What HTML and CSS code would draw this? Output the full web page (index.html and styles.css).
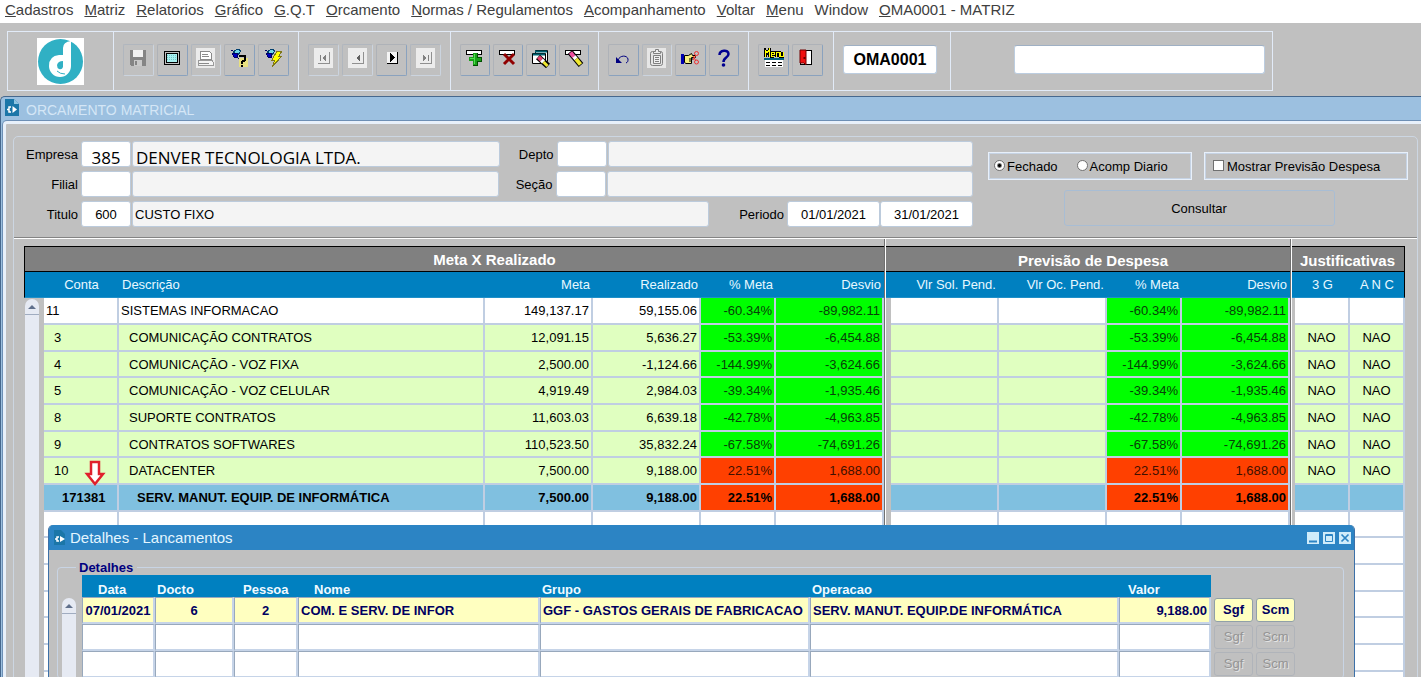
FILE: index.html
```html
<!DOCTYPE html>
<html lang="pt-BR">
<head>
  <meta charset="UTF-8">
  <meta name="viewport" content="width=device-width, initial-scale=1.0">
  <title>Orcamento Matricial</title>
  <link rel="stylesheet" href="styles.css">
</head>
<body>
  <!-- Menu bar -->
  <nav class="menubar">
    <a href="#"><u>C</u>adastros</a>
    <a href="#"><u>M</u>atriz</a>
    <a href="#"><u>R</u>elatorios</a>
    <a href="#"><u>G</u>ráfico</a>
    <a href="#"><u>G</u>.Q.T</a>
    <a href="#"><u>O</u>rcamento</a>
    <a href="#"><u>N</u>ormas / Regulamentos</a>
    <a href="#"><u>A</u>companhamento</a>
    <a href="#"><u>V</u>oltar</a>
    <a href="#"><u>M</u>enu</a>
    <a href="#">Window</a>
    <a href="#"><u>O</u>MA0001 - MATRIZ</a>
  </nav>

  <!-- Toolbar -->
  <div class="toolbar">
    <div class="group logo">
      <svg width="47" height="47" viewBox="0 0 47 47">
        <rect width="47" height="47" fill="#fff"/>
        <circle cx="23.500" cy="23.500" r="22.500" fill="#30b0c4"/>
        <path d="M26 10q0-6 8-7v25a11 11 0 0 1-22 0q0-10 10-11h4z" fill="#fff"/>
        <path d="M26 23v6q-1 3-4 2-2-1-2-4 1-4 6-4z" fill="#30b0c4"/>
        <path d="M20 33q3 3 8 3" fill="none" stroke="#30b0c4" stroke-width="1"/>
      </svg>
    </div>
    <div class="group tools-file">
      <button class="tool" disabled aria-label="Salvar">
        <svg width="20" height="20" viewBox="0 0 20 20" shape-rendering="crispEdges">
          <path d="M2 2h15l1 1v15H3l-1-1z" fill="#858585"/>
          <rect x="5" y="2" width="10" height="7" fill="#f2f2f2"/>
          <rect x="6" y="12" width="8" height="6" fill="#c9c9c9"/>
          <rect x="7" y="13" width="2" height="4" fill="#858585"/>
        </svg>
      </button>
      <button class="tool" aria-label="Tela">
        <svg width="20" height="20" viewBox="0 0 20 20" shape-rendering="crispEdges">
          <rect x="2" y="3" width="16" height="14" rx="1" fill="#000"/>
          <rect x="3" y="4" width="14" height="12" fill="#c0c0c0"/>
          <rect x="4" y="5" width="12" height="10" fill="#000"/>
          <rect x="5" y="6" width="10" height="8" fill="#a8f0f0"/>
          <path d="M5 7.500h10M5 9.500h10M5 11.500h10" stroke="#70c8c8" stroke-dasharray="1 1"/>
        </svg>
      </button>
      <button class="tool" disabled aria-label="Imprimir">
        <svg width="20" height="20" viewBox="0 0 20 20" shape-rendering="crispEdges">
          <rect width="19" height="20" fill="#ebebeb"/>
          <path d="M4 3h9l2 2v6H4z" fill="#fff" stroke="#8a8a8a"/>
          <path d="M6 6h6M6 8h7" stroke="#8a8a8a"/>
          <path d="M2 12h14l1 2v3H2z" fill="#f5f5f5" stroke="#9a9a9a"/>
          <path d="M3 15h10" stroke="#8a8a8a"/>
        </svg>
      </button>
      <button class="tool" aria-label="Entrar consulta">
        <svg width="20" height="20" viewBox="0 0 20 20" shape-rendering="crispEdges">
          <path d="M9 10h9v9H9z" fill="#e8e080"/>
          <path d="M3 4l5-3 3 2-3 4z" fill="#70d8e8" stroke="#004070"/>
          <path d="M1 2l2 1M2 5l5 0 1 5-4-1z" fill="#0000c0" stroke="#000060"/>
          <path d="M10 9V8h5v4l-3 2v2M12 17v2" fill="none" stroke="#000" stroke-width="2"/>
        </svg>
      </button>
      <button class="tool" aria-label="Executar consulta">
        <svg width="20" height="20" viewBox="0 0 20 20" shape-rendering="crispEdges">
          <path d="M3 4l5-3 3 2-3 4z" fill="#70d8e8" stroke="#004070"/>
          <path d="M1 2l2 1M2 5l5 0 1 5-4-1z" fill="#0000c0" stroke="#000060"/>
          <path d="M13 3h5l-3 5h3l-10 11 3-7H8z" fill="#ffff00" stroke="#807818" stroke-width="1"/>
        </svg>
      </button>
    </div>
    <div class="group tools-nav">
      <button class="tool" disabled aria-label="Primeiro">
        <svg width="20" height="20" viewBox="0 0 20 20" shape-rendering="crispEdges">
          <rect width="19" height="20" fill="#ececec"/>
          <path d="M4 15.500h11.500V4" fill="none" stroke="#909090"/>
          <path d="M6 7h1v6h-1zM12 7v6l-4-3z" fill="#808080"/>
        </svg>
      </button>
      <button class="tool" disabled aria-label="Anterior">
        <svg width="20" height="20" viewBox="0 0 20 20" shape-rendering="crispEdges">
          <rect width="19" height="20" fill="#ececec"/>
          <path d="M4 15.500h11.500V4" fill="none" stroke="#909090"/>
          <path d="M12 6v8l-4-4z" fill="#606060"/>
        </svg>
      </button>
      <button class="tool" aria-label="Próximo">
        <svg width="20" height="20" viewBox="0 0 20 20" shape-rendering="crispEdges">
          <rect x="5" y="4" width="11" height="12" fill="#f4f4f4"/>
          <path d="M5 15.500h10.500V4" fill="none" stroke="#000"/>
          <path d="M8 5v9l5-4.500z" fill="#000"/>
        </svg>
      </button>
      <button class="tool" disabled aria-label="Último">
        <svg width="20" height="20" viewBox="0 0 20 20" shape-rendering="crispEdges">
          <rect width="19" height="20" fill="#ececec"/>
          <path d="M4 15.500h11.500V4" fill="none" stroke="#909090"/>
          <path d="M12 7h1v6h-1zM7 7v6l4-3z" fill="#808080"/>
        </svg>
      </button>
    </div>
    <div class="group tools-record">
      <button class="tool" aria-label="Inserir registro">
        <svg width="20" height="20" viewBox="0 0 20 20" shape-rendering="crispEdges">
          <rect x="1.500" y="2.500" width="15" height="4" fill="#fff" stroke="#000"/>
          <path d="M8 5h4v4h4v4h-4v4H8v-4H4V9h4z" fill="#18a018"/>
          <path d="M12 5v4h4v4h-4v4H8" fill="none" stroke="#005000"/>
          <path d="M9 6v10M5 10h4" stroke="#50e050"/>
        </svg>
      </button>
      <button class="tool" aria-label="Excluir registro">
        <svg width="20" height="20" viewBox="0 0 20 20">
          <rect x="1.500" y="2.500" width="15" height="4" fill="#fff" stroke="#000"/>
          <path d="M6 6l10 10M16 6L6 16" stroke="#900000" stroke-width="3"/>
        </svg>
      </button>
      <button class="tool" aria-label="Limpar bloco">
        <svg width="20" height="20" viewBox="0 0 20 20">
          <path d="M4.500 2.500h12v11h-12z" fill="#fff" stroke="#000"/>
          <path d="M1.500 5.500h13v10h-13z" fill="#fff" stroke="#000"/>
          <path d="M4 3.500h12M2 6.500h12" stroke="#006070" stroke-width="2"/>
          <path d="M7 9l10 9" stroke="#000" stroke-width="6"/>
          <path d="M7.500 9l3 3" stroke="#e8406c" stroke-width="4"/>
          <path d="M10.500 12l2 2" stroke="#fff" stroke-width="4"/>
          <path d="M12.500 14l4 4" stroke="#f0e830" stroke-width="3"/>
        </svg>
      </button>
      <button class="tool" aria-label="Limpar registro">
        <svg width="20" height="20" viewBox="0 0 20 20">
          <rect x="1.500" y="2.500" width="15" height="4" fill="#fff" stroke="#000"/>
          <path d="M6 4l11 13" stroke="#000" stroke-width="6"/>
          <path d="M6.500 4.500l3.500 4.500" stroke="#f050a0" stroke-width="4"/>
          <path d="M10 8.500l2 2.500" stroke="#fff" stroke-width="4"/>
          <path d="M12 11l4.500 5.500" stroke="#f0e830" stroke-width="4"/>
        </svg>
      </button>
    </div>
    <div class="group tools-edit">
      <button class="tool" aria-label="Desfazer">
        <svg width="20" height="20" viewBox="0 0 20 20">
          <path d="M5 12c2-5 9-5 10-1 0 2 0 3-2 4" fill="none" stroke="#000080" stroke-width="1"/>
          <path d="M3 9v6h6z" fill="#000080"/>
        </svg>
      </button>
      <button class="tool" disabled aria-label="Colar">
        <svg width="20" height="20" viewBox="0 0 20 20">
          <rect width="19" height="20" fill="#e6e6e6"/>
          <rect x="3.500" y="3.500" width="12" height="14" rx="2" fill="#e6e6e6" stroke="#808080"/>
          <path d="M6.500 3.500h2v-2h3v2h2v2h-7zM6.500 7.500h7v8h-7z" fill="#f0f0f0" stroke="#808080"/>
          <path d="M8 9.500h4M8 11.500h4M8 13.500h4" stroke="#808080"/>
        </svg>
      </button>
      <button class="tool" aria-label="Lista">
        <svg width="20" height="20" viewBox="0 0 20 20">
          <rect x="1" y="6" width="3" height="10" fill="#0000b0"/>
          <path d="M4.500 7.500h4l3-2 1 2h3v2h-4v6H6l-1.500-1z" fill="#f8f080" stroke="#000"/>
          <path d="M9 11h4M9 13h3" stroke="#000"/>
          <path d="M13 8l3 5M13 12l3-5" stroke="#f03030"/>
          <circle cx="16.500" cy="5.500" r="2" fill="none" stroke="#f03030"/>
          <circle cx="16.500" cy="14" r="2" fill="none" stroke="#f03030"/>
        </svg>
      </button>
      <button class="tool" aria-label="Ajuda">
        <svg width="20" height="20" viewBox="0 0 20 20">
          <path d="M5.500 7c0-5 9-6 9-1 0 4-5 3-5 8" fill="none" stroke="#000090" stroke-width="2.500"/>
          <circle cx="9.500" cy="17" r="1.800" fill="#000090"/>
        </svg>
      </button>
    </div>
    <div class="group tools-exit">
      <button class="tool" aria-label="Menu">
        <svg width="20" height="20" viewBox="0 0 20 20" shape-rendering="crispEdges">
          <path d="M1 9V2l2 3 2-3v7M7 6h3V4H7v4h3M12 9V4h3v5M16 4v4h3V4" fill="none" stroke="#000" stroke-width="3"/>
          <path d="M1 9V2l2 3 2-3v7M7 6h3V4H7v4h3M12 9V4h3v5M16 4v4h3V4" fill="none" stroke="#ffff00" stroke-width="1"/>
          <rect x="0" y="10" width="20" height="2" fill="#006080"/>
          <rect x="1" y="12" width="18" height="7" fill="#fff"/>
          <path d="M2 14.500h16M2 17.500h16" stroke="#000" stroke-dasharray="4 2"/>
        </svg>
      </button>
      <button class="tool" aria-label="Sair">
        <svg width="20" height="20" viewBox="0 0 20 20">
          <rect x="2.500" y="2.500" width="11" height="14" fill="#fff" stroke="#000"/>
          <path d="M2 2h6v15l-2-2H2z" fill="#f01010" stroke="#700000" stroke-width="1"/>
          <rect x="5.500" y="9" width="2" height="2" fill="#600"/>
        </svg>
      </button>
    </div>
    <div class="group code-box">
      <input type="text" class="screen-code" value="OMA0001" aria-label="Tela">
    </div>
    <div class="group search-box">
      <input type="text" class="screen-search" aria-label="Pesquisa">
    </div>
  </div>

  <!-- Main window -->
  <main class="window">
    <header class="window-title">
      <svg width="14" height="17" viewBox="0 0 14 17">
        <path d="M0 0h9l5 5v12H0z" fill="#1b76a8"/>
        <path d="M9 0l5 5H9z" fill="#8fc4e0"/>
        <path d="M6 8H4v5h2M2 10.500h2" fill="none" stroke="#fff" stroke-width="1.500"/>
        <path d="M7.500 7l4.500 3.500L7.500 14z" fill="#fff"/>
      </svg>
      <h1>ORCAMENTO MATRICIAL</h1>
    </header>
    <div class="window-body">
      <div class="panel">
        <form class="filters">
          <div class="fields">
            <div class="field-row">
              <label for="empresa">Empresa</label>
              <input type="text" id="empresa" class="code large" value="385">
              <input type="text" class="name large" value="DENVER TECNOLOGIA LTDA." aria-label="Nome da empresa" readonly>
              <label for="depto" class="second">Depto</label>
              <input type="text" id="depto" class="code">
              <input type="text" class="name" aria-label="Nome do depto" readonly>
            </div>
            <div class="field-row">
              <label for="filial">Filial</label>
              <input type="text" id="filial" class="code">
              <input type="text" class="name" aria-label="Nome da filial" readonly>
              <label for="secao" class="second">Seção</label>
              <input type="text" id="secao" class="code">
              <input type="text" class="name" aria-label="Nome da seção" readonly>
            </div>
            <div class="field-row">
              <label for="titulo">Titulo</label>
              <input type="text" id="titulo" class="code" value="600">
              <input type="text" class="name" value="CUSTO FIXO" aria-label="Nome do titulo" readonly>
              <label for="periodo" class="period">Periodo</label>
              <input type="text" id="periodo" class="date" value="01/01/2021">
              <input type="text" class="date" value="31/01/2021" aria-label="Periodo final">
            </div>
          </div>
          <div class="options">
            <div class="option-row">
              <div class="option-box">
                <label><input type="radio" name="tipo" checked>Fechado</label>
                <label><input type="radio" name="tipo">Acomp Diario</label>
              </div>
              <div class="option-box">
                <label><input type="checkbox">Mostrar Previsão Despesa</label>
              </div>
            </div>
            <button type="button" class="consultar">Consultar</button>
          </div>
        </form>

        <!-- Budget table -->
        <table class="budget">
          <colgroup>
            <col class="w-scroll"><col class="w-pct"><col><col class="w-value"><col class="w-value"><col class="w-pct"><col class="w-value">
            <col class="w-gap"><col class="w-value"><col class="w-value"><col class="w-pct"><col class="w-value">
            <col class="w-gap-small"><col class="w-flag"><col class="w-flag">
          </colgroup>
          <thead>
            <tr class="titles">
              <th colspan="7" class="main">Meta X Realizado</th>
              <th class="gap"></th>
              <th colspan="4" class="low">Previsão de Despesa</th>
              <th class="gap"></th>
              <th colspan="2" class="low left">Justificativas</th>
            </tr>
            <tr class="heads">
              <th></th><th>Conta</th><th class="left">Descrição</th><th class="num">Meta</th><th class="num">Realizado</th><th class="num">% Meta</th><th class="num">Desvio</th>
              <th class="gap"></th><th class="num">Vlr Sol. Pend.</th><th class="num">Vlr Oc. Pend.</th><th class="num">% Meta</th><th class="num">Desvio</th>
              <th class="gap"></th><th>3 G</th><th>A N C</th>
            </tr>
          </thead>
          <tbody>
            <tr>
              <td rowspan="15" class="scroll"><div class="scrollbar"><button type="button" aria-label="Subir"></button></div></td>
              <td>11</td><td>SISTEMAS INFORMACAO</td><td class="num">149,137.17</td><td class="num">59,155.06</td><td class="num good">-60.34%</td><td class="num good">-89,982.11</td>
              <td class="gap"></td><td></td><td></td><td class="num good">-60.34%</td><td class="num good">-89,982.11</td>
              <td class="gap"></td><td></td><td></td>
            </tr>
            <tr class="item">
              <td>3</td><td>COMUNICAÇÃO CONTRATOS</td><td class="num">12,091.15</td><td class="num">5,636.27</td><td class="num good">-53.39%</td><td class="num good">-6,454.88</td>
              <td class="gap"></td><td></td><td></td><td class="num good">-53.39%</td><td class="num good">-6,454.88</td>
              <td class="gap"></td><td class="flag">NAO</td><td class="flag">NAO</td>
            </tr>
            <tr class="item">
              <td>4</td><td>COMUNICAÇÃO - VOZ FIXA</td><td class="num">2,500.00</td><td class="num">-1,124.66</td><td class="num good">-144.99%</td><td class="num good">-3,624.66</td>
              <td class="gap"></td><td></td><td></td><td class="num good">-144.99%</td><td class="num good">-3,624.66</td>
              <td class="gap"></td><td class="flag">NAO</td><td class="flag">NAO</td>
            </tr>
            <tr class="item">
              <td>5</td><td>COMUNICAÇÃO - VOZ CELULAR</td><td class="num">4,919.49</td><td class="num">2,984.03</td><td class="num good">-39.34%</td><td class="num good">-1,935.46</td>
              <td class="gap"></td><td></td><td></td><td class="num good">-39.34%</td><td class="num good">-1,935.46</td>
              <td class="gap"></td><td class="flag">NAO</td><td class="flag">NAO</td>
            </tr>
            <tr class="item">
              <td>8</td><td>SUPORTE CONTRATOS</td><td class="num">11,603.03</td><td class="num">6,639.18</td><td class="num good">-42.78%</td><td class="num good">-4,963.85</td>
              <td class="gap"></td><td></td><td></td><td class="num good">-42.78%</td><td class="num good">-4,963.85</td>
              <td class="gap"></td><td class="flag">NAO</td><td class="flag">NAO</td>
            </tr>
            <tr class="item">
              <td>9</td><td>CONTRATOS SOFTWARES</td><td class="num">110,523.50</td><td class="num">35,832.24</td><td class="num good">-67.58%</td><td class="num good">-74,691.26</td>
              <td class="gap"></td><td></td><td></td><td class="num good">-67.58%</td><td class="num good">-74,691.26</td>
              <td class="gap"></td><td class="flag">NAO</td><td class="flag">NAO</td>
            </tr>
            <tr class="item">
              <td class="pointed">10
                <svg class="arrow" width="22" height="28" viewBox="0 0 22 28">
                  <path d="M7 2h8v12h4l-8 10-8-10h4z" fill="#fff" stroke="#e0202c" stroke-width="2.500"/>
                </svg>
              </td>
              <td>DATACENTER</td><td class="num">7,500.00</td><td class="num">9,188.00</td><td class="num bad">22.51%</td><td class="num bad">1,688.00</td>
              <td class="gap"></td><td></td><td></td><td class="num bad">22.51%</td><td class="num bad">1,688.00</td>
              <td class="gap"></td><td class="flag">NAO</td><td class="flag">NAO</td>
            </tr>
            <tr class="selected">
              <td>171381</td><td>SERV. MANUT. EQUIP. DE INFORMÁTICA</td><td class="num">7,500.00</td><td class="num">9,188.00</td><td class="num bad">22.51%</td><td class="num bad">1,688.00</td>
              <td class="gap"></td><td></td><td></td><td class="num bad">22.51%</td><td class="num bad">1,688.00</td>
              <td class="gap"></td><td></td><td></td>
            </tr>
            <tr><td></td><td></td><td></td><td></td><td></td><td></td><td class="gap"></td><td></td><td></td><td></td><td></td><td class="gap"></td><td></td><td></td></tr>
            <tr><td></td><td></td><td></td><td></td><td></td><td></td><td class="gap"></td><td></td><td></td><td></td><td></td><td class="gap"></td><td></td><td></td></tr>
            <tr><td></td><td></td><td></td><td></td><td></td><td></td><td class="gap"></td><td></td><td></td><td></td><td></td><td class="gap"></td><td></td><td></td></tr>
            <tr><td></td><td></td><td></td><td></td><td></td><td></td><td class="gap"></td><td></td><td></td><td></td><td></td><td class="gap"></td><td></td><td></td></tr>
            <tr><td></td><td></td><td></td><td></td><td></td><td></td><td class="gap"></td><td></td><td></td><td></td><td></td><td class="gap"></td><td></td><td></td></tr>
            <tr><td></td><td></td><td></td><td></td><td></td><td></td><td class="gap"></td><td></td><td></td><td></td><td></td><td class="gap"></td><td></td><td></td></tr>
            <tr><td></td><td></td><td></td><td></td><td></td><td></td><td class="gap"></td><td></td><td></td><td></td><td></td><td class="gap"></td><td></td><td></td></tr>
          </tbody>
        </table>
      </div>
    </div>
  </main>

  <!-- Details window -->
  <section class="dialog">
    <header class="dialog-title">
      <svg width="12" height="15" viewBox="0 0 12 15">
        <path d="M0 0h7l4 4v11H0z" fill="#1b76a8"/>
        <path d="M5 7H3v4h2M1 9h2" fill="none" stroke="#fff" stroke-width="1.500"/>
        <path d="M6 6l5 3-5 3z" fill="#fff"/>
      </svg>
      <h2>Detalhes - Lancamentos</h2>
      <button type="button" aria-label="Minimizar"><svg width="12" height="12" viewBox="0 0 12 12"><path d="M2 9.500h8" stroke="#2c84c4" stroke-width="2"/></svg></button>
      <button type="button" aria-label="Maximizar"><svg width="12" height="12" viewBox="0 0 12 12"><path d="M2.500 2.500h7v7h-7zM2 3.500h8" fill="none" stroke="#2c84c4"/></svg></button>
      <button type="button" aria-label="Fechar"><svg width="12" height="12" viewBox="0 0 12 12"><path d="M2.500 2.500l7 7M9.500 2.500l-7 7" stroke="#2c84c4" stroke-width="1.700"/></svg></button>
    </header>
    <fieldset>
      <legend>Detalhes</legend>
      <table class="details">
        <colgroup>
          <col class="w-scroll"><col class="w-data"><col class="w-docto"><col class="w-pessoa"><col class="w-nome"><col class="w-grupo"><col><col class="w-valor"><col class="w-button"><col class="w-button">
        </colgroup>
        <thead>
          <tr>
            <td></td><th class="wider">Data</th><th>Docto</th><th class="wide">Pessoa</th><th class="wider">Nome</th><th>Grupo</th><th>Operacao</th><th class="wide">Valor</th><td></td><td></td>
          </tr>
        </thead>
        <tbody>
          <tr class="filled">
            <td rowspan="3" class="scroll"><div class="scrollbar"><button type="button" aria-label="Subir"></button></div></td>
            <td class="center">07/01/2021</td><td class="center">6</td><td class="center">2</td><td>COM. E SERV. DE INFOR</td><td>GGF - GASTOS GERAIS DE FABRICACAO</td><td>SERV. MANUT. EQUIP.DE INFORMÁTICA</td><td class="num">9,188.00</td>
            <td class="action"><button type="button">Sgf</button></td><td class="action"><button type="button">Scm</button></td>
          </tr>
          <tr>
            <td></td><td></td><td></td><td></td><td></td><td></td><td></td>
            <td class="action"><button type="button" disabled>Sgf</button></td><td class="action"><button type="button" disabled>Scm</button></td>
          </tr>
          <tr>
            <td></td><td></td><td></td><td></td><td></td><td></td><td></td>
            <td class="action"><button type="button" disabled>Sgf</button></td><td class="action"><button type="button" disabled>Scm</button></td>
          </tr>
        </tbody>
      </table>
    </fieldset>
  </section>
</body>
</html>
```

FILE: styles.css
```css
* {
  box-sizing: border-box;
}

body {
  margin: 0;
  height: 100vh;
  display: flex;
  flex-direction: column;
  overflow: hidden;
  position: relative;
  background: #c0c0c0;
  font-family: "Liberation Sans", Arial, sans-serif;
  font-size: 13px;
  color: #000;
}

button,
input {
  font: inherit;
  color: inherit;
}

/* Menu bar */
.menubar {
  display: flex;
  gap: 11px;
  height: 23px;
  padding-left: 5px;
  background: #fff;
  font-size: 15px;
  line-height: 20px;
  white-space: nowrap;
}

.menubar a {
  color: #404040;
  text-decoration: none;
}

/* Toolbar */
.toolbar {
  display: flex;
  align-self: flex-start;
  margin: 8px 0 5px 7px;
  height: 60px;
  border: 1px solid #e2ebf8;
}

.group {
  display: flex;
  align-items: center;
  gap: 3px;
  padding: 0 9px 3px 9px;
  border-left: 1px solid #e2ebf8;
}

.logo {
  width: 105px;
  justify-content: center;
  border-left: none;
  padding: 0;
}

.tools-file {
  width: 185px;
}

.tools-nav {
  width: 152px;
}

.tools-record {
  width: 148px;
}

.tools-edit {
  width: 150px;
}

.tools-exit {
  width: 85px;
}

.code-box {
  width: 117px;
}

.search-box {
  width: 322px;
  justify-content: flex-end;
  padding-right: 7px;
}

.tool {
  width: 31px;
  height: 32px;
  padding: 0 0 3px;
  display: flex;
  align-items: center;
  justify-content: center;
  background: #c0c0c0;
  border: 1px solid;
  border-color: #aeb2b8 #8aa2be #8aa2be #aeb2b8;
  border-radius: 2px;
}

.tool:disabled {
  border-color: #b0b6be #cbd4df #cbd4df #b0b6be;
}

.screen-code,
.screen-search {
  height: 29px;
  padding: 0;
  background: #fff;
  border: 1px solid #bccde0;
  border-top-color: #9fb0c4;
  border-radius: 3px;
}

.screen-code {
  width: 94px;
  text-align: center;
  font-size: 16px;
  font-weight: bold;
}

.screen-search {
  width: 251px;
}

/* Main window */
.window {
  flex: 1;
  min-height: 0;
  overflow: hidden;
  background: #9cc0e0;
  border-top: 1px solid #46688e;
  border-left: 1px solid #46688e;
  border-top-left-radius: 5px;
}

.window-title {
  display: flex;
  gap: 7px;
  height: 24px;
  padding: 2px 0 0 4px;
}

.window-title h1 {
  margin: 0;
  font-size: 14px;
  font-weight: normal;
  line-height: 22px;
  color: #d4e6f6;
}

.window-body {
  margin-left: 2px;
  padding: 12px 3px 0 7px;
  background: #c0c0c0;
  border-top: 3px solid #e8f0fa;
  border-left: 3px solid #e8f0fa;
  border-top-left-radius: 4px;
  box-shadow: 0 0 0 1px #6d8fb5;
}

.panel {
  border: 1px solid #ccd6e2;
  border-radius: 5px;
}

/* Filters */
.filters {
  display: flex;
  padding: 4px 0 11px;
  border-bottom: 1px solid #fff;
  box-shadow: inset 0 -1px #848484;
}

.fields {
  flex: 1;
  display: flex;
  flex-direction: column;
  gap: 4px;
}

.field-row {
  display: flex;
  align-items: center;
}

.field-row label {
  width: 67px;
  padding-right: 3px;
  text-align: right;
}

.field-row label.second {
  width: 57px;
}

.field-row label.period {
  width: 78px;
}

.field-row input {
  height: 26px;
  padding: 0 3px;
  background: #fff;
  border: 1px solid #bccbdc;
  border-radius: 3px;
}

.field-row .code {
  width: 50px;
  text-align: center;
}

.field-row .name {
  flex: 1;
  min-width: 0;
  margin-left: 1px;
  background: #f4f4f4;
  padding: 0 2px;
}

.field-row .date {
  width: 93px;
  text-align: center;
}

.field-row .large {
  font-family: "Open Sans", "Noto Sans", sans-serif;
  font-size: 17px;
  padding: 6px 3px 0;
}

.options {
  width: 444px;
  display: flex;
  flex-direction: column;
  align-items: center;
  gap: 10px;
  padding: 11px 9px 0 15px;
}

.option-row {
  display: flex;
  gap: 12px;
  align-self: stretch;
}

.option-box {
  flex: 1;
  display: flex;
  align-items: center;
  gap: 18px;
  height: 28px;
  padding-left: 4px;
  border: 1px solid #e8f0fa;
  box-shadow: inset 0 0 0 1px #c6d3e4;
  white-space: nowrap;
}

.option-box label {
  display: flex;
  align-items: center;
  gap: 2px;
}

.option-box input {
  appearance: none;
  width: 11px;
  height: 11px;
  margin: 0 1px 2px;
  background: #fff;
  border: 1px solid #707070;
}

.option-box input[type="checkbox"] {
  margin-left: 4px;
}

.option-box input[type="radio"] {
  margin-right: 0;
  border-radius: 50%;
}

.option-box input[type="radio"]:checked {
  background: radial-gradient(circle, #000 1px, #fff 3px);
}

.consultar {
  width: 271px;
  height: 36px;
  margin-left: 2px;
  background: #c0c0c0;
  border: 1px solid #a8bdd4;
  border-radius: 3px;
}

/* Tables */
table {
  table-layout: fixed;
  border-spacing: 0;
  white-space: nowrap;
}

th,
td {
  padding: 0;
}

.num {
  text-align: right;
}

.w-scroll {
  width: 20px;
}

.w-value {
  width: 108px;
}

.w-pct {
  width: 75px;
}

.w-gap {
  width: 7px;
}

.w-gap-small {
  width: 5px;
}

.w-flag {
  width: 55px;
}

.scrollbar {
  width: 14px;
  height: 100%;
  background: #e6eaf3;
  border-radius: 7px 7px 0 0;
}

.scrollbar button {
  display: block;
  width: 14px;
  height: 16px;
  padding: 0;
  background: none;
  border: none;
  border-bottom: 1px solid #a0acc0;
}

.scrollbar button::before {
  content: "";
  display: block;
  margin: 0 auto;
  width: 0;
  border: 4px solid transparent;
  border-top: none;
  border-bottom-color: #60708c;
}

/* Budget table */
.budget {
  width: calc(100% - 22px);
  margin: 7px 12px 0 10px;
}

.budget .titles th {
  height: 25px;
  background: #808080;
  border-top: 1px solid #000;
  color: #fff;
  font-size: 15px;
}

.budget .titles th.main {
  padding-left: 80px;
}

.budget .titles th.low {
  padding: 3px 0 0 5px;
}

.budget .titles th:first-child,
.budget .heads th:first-child {
  border-left: 1px solid #000;
}

.budget .titles th:last-child,
.budget .heads th:last-child {
  border-right: 1px solid #000;
}

.budget .heads th {
  height: 27px;
  padding: 0 3px;
  background: #0080c0;
  border-top: 1px solid #000;
  border-bottom: 1px solid #2090c8;
  color: #e8f8ff;
  font-weight: normal;
}

.budget .titles th.gap,
.budget .heads th.gap {
  padding: 0;
}

.budget th.left {
  text-align: left;
}

.budget tbody tr {
  height: 27px;
}

.budget tbody tr:nth-child(3n) {
  height: 26px;
}

.budget tbody td {
  padding: 0 2px;
  background: #fff;
  border-right: 2px solid #c0cee2;
  border-bottom: 2px solid #c0cee2;
}

.budget .item td {
  background: #e0ffc0;
}

.budget .item td:first-child,
.budget .item td:nth-child(2) {
  padding-left: 10px;
}

.budget .selected td {
  background: #80c0e0;
  font-weight: bold;
}

.budget .selected td:first-child,
.budget .selected td:nth-child(2) {
  padding-left: 18px;
}

.budget tbody .good {
  background: #00ff00;
  color: #084008;
}

.budget tbody .bad {
  background: #ff4000;
  color: #401000;
}

.budget .selected .bad {
  color: #000;
}

.budget .flag {
  text-align: center;
}

.budget tbody .scroll {
  padding: 1px 0 0 1px;
  height: 1px;
  background: #c0c0c0;
  border: none;
}

.budget .gap,
.budget .pointed {
  position: relative;
}

.budget tbody .gap {
  background: #c0c0c0;
  border: none;
}

/* Vertical rule between column groups */
.budget .gap::before {
  content: "";
  position: absolute;
  top: -1px;
  bottom: -1px;
  left: 0;
  width: 1px;
  background: #fff;
  border-left: 1px solid #707070;
}

.budget .titles .gap::before {
  top: -8px;
}

.arrow {
  position: absolute;
  left: 40px;
  top: 2px;
  z-index: 1;
}

/* Details window */
.dialog {
  position: absolute;
  top: 525px;
  left: 48px;
  right: 66px;
  height: 180px;
  background: #c0c0c0;
  border: 1px solid #3c70a8;
  border-top: none;
  border-radius: 5px 5px 0 0;
  overflow: hidden;
}

.dialog-title {
  display: flex;
  align-items: center;
  gap: 4px;
  height: 25px;
  padding: 0 3px 0 5px;
  background: #2c84c4;
}

.dialog-title h2 {
  flex: 1;
  margin: 0;
  font-size: 15px;
  font-weight: normal;
  color: #e4f6ff;
}

.dialog-title button {
  display: flex;
  width: 12px;
  height: 12px;
  padding: 0;
  background: #d0ecfa;
  border: none;
}

.dialog fieldset {
  margin: 10px 10px 0 8px;
  padding: 0 48px 0 4px;
  border: 1px solid #c8d4e4;
  border-radius: 4px;
}

.dialog legend {
  margin-left: 14px;
  padding: 0 4px 0 3px;
  font-weight: bold;
  line-height: 15px;
  color: #000080;
}

.w-data {
  width: 73px;
}

.w-docto {
  width: 79px;
}

.w-pessoa {
  width: 64px;
}

.w-nome {
  width: 242px;
}

.w-grupo {
  width: 270px;
}

.w-valor {
  width: 92px;
}

.w-button {
  width: 42px;
}

.details {
  width: 100%;
  font-weight: bold;
  color: #000060;
}

.details th {
  height: 22px;
  padding: 6px 2px 0;
  text-align: left;
  background: #0080c0;
  color: #f0faff;
}

.details th.wide {
  padding-left: 9px;
}

.details th.wider {
  padding-left: 16px;
}

.details .center {
  text-align: center;
}

.details tbody td {
  height: 27px;
  padding: 0 2px;
  background: #fff;
  border: 1px solid #98a8bc;
  border-right: 2px solid #c6d4e8;
  border-bottom: 2px solid #c6d4e8;
}

.details .filled td {
  background: #ffffc0;
}

.details tbody .scroll,
.details tbody .action {
  background: none;
  border: none;
}

.details tbody .scroll {
  padding: 1px 0 0;
}

.details tbody .action {
  padding: 0 0 2px 3px;
}

.action button {
  display: block;
  width: 39px;
  height: 24px;
  padding: 0;
  background: #ffffc0;
  border: 1px solid #90a0a8;
  border-radius: 3px;
}

.action button:disabled {
  background: #c0c0c0;
  border-color: #b0b4ba;
  color: #949494;
  font-weight: normal;
  text-shadow: 1px 1px #e4e4e4;
}
```
